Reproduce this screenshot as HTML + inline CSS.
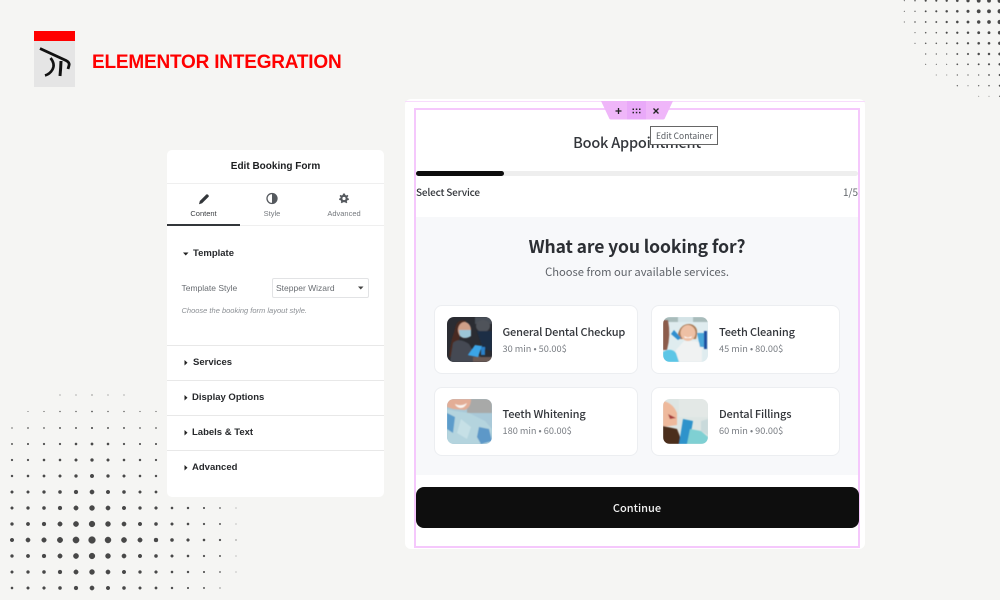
<!DOCTYPE html>
<html lang="en">
<head>
<meta charset="utf-8">
<title>Elementor Integration</title>
<style>
html,body{margin:0;padding:0}
body{width:1000px;height:600px;overflow:hidden;background:#f5f5f3;position:relative;font-family:"Liberation Sans",sans-serif}
.a{position:absolute}
.t{position:absolute;white-space:nowrap;line-height:16px;height:16px}
.n{font-family:"Noto Sans CJK JP","Liberation Sans",sans-serif}
.c{transform:translateX(-50%)}
.acc{font-size:9.5px;font-weight:bold;color:#26282b}
.div{position:absolute;left:167px;width:217px;height:1px;background:#e8e8e8}
.card{position:absolute;background:#fff;border:1px solid #eceef1;border-radius:8px;box-sizing:border-box}
.img{position:absolute;width:45px;height:45px}
.name{font-size:11px;letter-spacing:-.15px;font-weight:500;color:#33363b}
.sub{font-size:9.2px;color:#7b7f85}
</style>
</head>
<body>

<svg class="a" style="left:0;top:385px" width="250" height="215" viewBox="0 385 250 215" fill="#484848">
<g stroke="#484848" stroke-width=".5">
<circle cx="12" cy="540" r="1.8"/><circle cx="28" cy="540" r="2.1"/><circle cx="44" cy="540" r="2.3"/><circle cx="60" cy="540" r="2.7"/><circle cx="76" cy="540" r="3.1"/><circle cx="92" cy="540" r="3.4"/><circle cx="108" cy="540" r="3"/><circle cx="124" cy="540" r="2.6"/><circle cx="140" cy="540" r="2.2"/><circle cx="156" cy="540" r="2"/><circle cx="172" cy="540" r="1.6"/><circle cx="188" cy="540" r="1.4"/><circle cx="204" cy="540" r="1.1"/><circle cx="220" cy="540" r=".9"/><circle cx="236" cy="540" r=".4"/>
<circle cx="12" cy="524" r="1.5"/><circle cx="28" cy="524" r="1.7"/><circle cx="44" cy="524" r="1.9"/><circle cx="60" cy="524" r="2.2"/><circle cx="76" cy="524" r="2.6"/><circle cx="92" cy="524" r="2.9"/><circle cx="108" cy="524" r="2.5"/><circle cx="124" cy="524" r="2.1"/><circle cx="140" cy="524" r="1.8"/><circle cx="156" cy="524" r="1.6"/><circle cx="172" cy="524" r="1.3"/><circle cx="188" cy="524" r="1.1"/><circle cx="204" cy="524" r=".9"/><circle cx="220" cy="524" r=".7"/><circle cx="236" cy="524" r=".2"/>
<circle cx="12" cy="556" r="1.5"/><circle cx="28" cy="556" r="1.7"/><circle cx="44" cy="556" r="1.9"/><circle cx="60" cy="556" r="2.2"/><circle cx="76" cy="556" r="2.6"/><circle cx="92" cy="556" r="2.9"/><circle cx="108" cy="556" r="2.5"/><circle cx="124" cy="556" r="2.1"/><circle cx="140" cy="556" r="1.8"/><circle cx="156" cy="556" r="1.6"/><circle cx="172" cy="556" r="1.3"/><circle cx="188" cy="556" r="1.1"/><circle cx="204" cy="556" r=".9"/><circle cx="220" cy="556" r=".7"/><circle cx="236" cy="556" r=".2"/>
<circle cx="12" cy="508" r="1.3"/><circle cx="28" cy="508" r="1.5"/><circle cx="44" cy="508" r="1.6"/><circle cx="60" cy="508" r="1.9"/><circle cx="76" cy="508" r="2.2"/><circle cx="92" cy="508" r="2.5"/><circle cx="108" cy="508" r="2.1"/><circle cx="124" cy="508" r="1.8"/><circle cx="140" cy="508" r="1.5"/><circle cx="156" cy="508" r="1.4"/><circle cx="172" cy="508" r="1.1"/><circle cx="188" cy="508" r="1"/><circle cx="204" cy="508" r=".8"/><circle cx="220" cy="508" r=".6"/><circle cx="236" cy="508" r=".2"/>
<circle cx="12" cy="572" r="1.3"/><circle cx="28" cy="572" r="1.5"/><circle cx="44" cy="572" r="1.6"/><circle cx="60" cy="572" r="1.9"/><circle cx="76" cy="572" r="2.2"/><circle cx="92" cy="572" r="2.5"/><circle cx="108" cy="572" r="2.1"/><circle cx="124" cy="572" r="1.8"/><circle cx="140" cy="572" r="1.5"/><circle cx="156" cy="572" r="1.4"/><circle cx="172" cy="572" r="1.1"/><circle cx="188" cy="572" r="1"/><circle cx="204" cy="572" r=".8"/><circle cx="220" cy="572" r=".6"/><circle cx="236" cy="572" r=".2"/>
<circle cx="12" cy="588" r="1.1"/><circle cx="28" cy="588" r="1.3"/><circle cx="44" cy="588" r="1.4"/><circle cx="60" cy="588" r="1.6"/><circle cx="76" cy="588" r="1.9"/><circle cx="92" cy="588" r="2.1"/><circle cx="108" cy="588" r="1.8"/><circle cx="124" cy="588" r="1.6"/><circle cx="140" cy="588" r="1.3"/><circle cx="156" cy="588" r="1.2"/><circle cx="172" cy="588" r="1"/><circle cx="188" cy="588" r=".8"/><circle cx="204" cy="588" r=".7"/><circle cx="220" cy="588" r=".4"/>
<circle cx="12" cy="492" r="1.3"/><circle cx="28" cy="492" r="1.3"/><circle cx="44" cy="492" r="1.5"/><circle cx="60" cy="492" r="1.6"/><circle cx="76" cy="492" r="1.9"/><circle cx="92" cy="492" r="2.1"/><circle cx="108" cy="492" r="1.8"/><circle cx="124" cy="492" r="1.6"/><circle cx="140" cy="492" r="1.3"/><circle cx="156" cy="492" r="1.2"/>
<circle cx="12" cy="476" r="1"/><circle cx="28" cy="476" r="1.1"/><circle cx="44" cy="476" r="1.2"/><circle cx="60" cy="476" r="1.3"/><circle cx="76" cy="476" r="1.5"/><circle cx="92" cy="476" r="1.8"/><circle cx="108" cy="476" r="1.5"/><circle cx="124" cy="476" r="1.3"/><circle cx="140" cy="476" r="1.1"/><circle cx="156" cy="476" r="1"/>
<circle cx="12" cy="460" r=".9"/><circle cx="28" cy="460" r=".9"/><circle cx="44" cy="460" r="1.1"/><circle cx="60" cy="460" r="1.1"/><circle cx="76" cy="460" r="1.3"/><circle cx="92" cy="460" r="1.5"/><circle cx="108" cy="460" r="1.3"/><circle cx="124" cy="460" r="1.1"/><circle cx="140" cy="460" r="1"/><circle cx="156" cy="460" r=".9"/>
<circle cx="12" cy="444" r=".7"/><circle cx="28" cy="444" r=".8"/><circle cx="44" cy="444" r=".9"/><circle cx="60" cy="444" r=".9"/><circle cx="76" cy="444" r="1.1"/><circle cx="92" cy="444" r="1.2"/><circle cx="108" cy="444" r="1.1"/><circle cx="124" cy="444" r=".9"/><circle cx="140" cy="444" r=".8"/><circle cx="156" cy="444" r=".8"/>
<circle cx="12" cy="428" r=".5"/><circle cx="28" cy="428" r=".6"/><circle cx="44" cy="428" r=".6"/><circle cx="60" cy="428" r=".7"/><circle cx="76" cy="428" r=".7"/><circle cx="92" cy="428" r=".8"/><circle cx="108" cy="428" r=".7"/><circle cx="124" cy="428" r=".7"/><circle cx="140" cy="428" r=".6"/><circle cx="156" cy="428" r=".6"/>
<circle cx="28" cy="411.5" r=".3"/><circle cx="44" cy="411.5" r=".4"/><circle cx="60" cy="411.5" r=".5"/><circle cx="76" cy="411.5" r=".5"/><circle cx="92" cy="411.5" r=".6"/><circle cx="108" cy="411.5" r=".5"/><circle cx="124" cy="411.5" r=".5"/><circle cx="140" cy="411.5" r=".4"/><circle cx="156" cy="411.5" r=".4"/>
<circle cx="60" cy="395" r=".3"/><circle cx="76" cy="395" r=".3"/><circle cx="92" cy="395" r=".4"/><circle cx="108" cy="395" r=".3"/><circle cx="124" cy="395" r=".3"/>
</g>
</svg>

<svg class="a" style="left:890px;top:0" width="110" height="105" viewBox="890 0 110 105" fill="#484848">
<g stroke="#484848" stroke-width=".3">
<circle cx="904.3" cy=".7" r=".4"/><circle cx="915" cy=".7" r=".6"/><circle cx="925.7" cy=".7" r=".9"/><circle cx="936.3" cy=".7" r=".9"/><circle cx="946.7" cy=".7" r="1"/><circle cx="957.3" cy=".7" r="1.2"/><circle cx="968" cy=".7" r="1.5"/><circle cx="978.7" cy=".7" r="1.8"/><circle cx="989" cy=".7" r="1.8"/><circle cx="999.7" cy=".7" r="2"/>
<circle cx="904.3" cy="11.3" r=".4"/><circle cx="915" cy="11.3" r=".5"/><circle cx="925.7" cy="11.3" r=".8"/><circle cx="936.3" cy="11.3" r=".9"/><circle cx="946.7" cy="11.3" r="1.1"/><circle cx="957.3" cy="11.3" r="1.2"/><circle cx="968" cy="11.3" r="1.4"/><circle cx="978.7" cy="11.3" r="1.8"/><circle cx="989" cy="11.3" r="1.8"/><circle cx="999.7" cy="11.3" r="2"/>
<circle cx="904.3" cy="22" r=".4"/><circle cx="915" cy="22" r=".6"/><circle cx="925.7" cy="22" r=".7"/><circle cx="936.3" cy="22" r=".8"/><circle cx="946.7" cy="22" r="1"/><circle cx="957.3" cy="22" r="1.2"/><circle cx="968" cy="22" r="1.3"/><circle cx="978.7" cy="22" r="1.6"/><circle cx="989" cy="22" r="1.7"/><circle cx="999.7" cy="22" r="2"/>
<circle cx="915" cy="32.7" r=".4"/><circle cx="925.7" cy="32.7" r=".6"/><circle cx="936.3" cy="32.7" r=".6"/><circle cx="946.7" cy="32.7" r=".9"/><circle cx="957.3" cy="32.7" r="1"/><circle cx="968" cy="32.7" r="1.1"/><circle cx="978.7" cy="32.7" r="1.3"/><circle cx="989" cy="32.7" r="1.3"/><circle cx="999.7" cy="32.7" r="1.7"/>
<circle cx="915" cy="43.3" r=".4"/><circle cx="925.7" cy="43.3" r=".6"/><circle cx="936.3" cy="43.3" r=".6"/><circle cx="946.7" cy="43.3" r=".7"/><circle cx="957.3" cy="43.3" r=".9"/><circle cx="968" cy="43.3" r="1"/><circle cx="978.7" cy="43.3" r="1.2"/><circle cx="989" cy="43.3" r="1.2"/><circle cx="999.7" cy="43.3" r="1.5"/>
<circle cx="925.7" cy="54" r=".5"/><circle cx="936.3" cy="54" r=".5"/><circle cx="946.7" cy="54" r=".5"/><circle cx="957.3" cy="54" r=".8"/><circle cx="968" cy="54" r=".9"/><circle cx="978.7" cy="54" r="1.1"/><circle cx="989" cy="54" r="1.1"/><circle cx="999.7" cy="54" r="1.3"/>
<circle cx="925.7" cy="64.3" r=".4"/><circle cx="936.3" cy="64.3" r=".4"/><circle cx="946.7" cy="64.3" r=".4"/><circle cx="957.3" cy="64.3" r=".7"/><circle cx="968" cy="64.3" r=".7"/><circle cx="978.7" cy="64.3" r=".8"/><circle cx="989" cy="64.3" r=".9"/><circle cx="999.7" cy="64.3" r="1.1"/>
<circle cx="936.3" cy="75" r=".5" opacity=".5"/><circle cx="946.7" cy="75" r=".5" opacity=".5"/><circle cx="957.3" cy="75" r=".5"/><circle cx="968" cy="75" r=".5"/><circle cx="978.7" cy="75" r=".5"/><circle cx="989" cy="75" r=".7"/><circle cx="999.7" cy="75" r=".9"/>
<circle cx="957.3" cy="85.7" r=".5"/><circle cx="968" cy="85.7" r=".5" opacity=".6"/><circle cx="978.7" cy="85.7" r=".5"/><circle cx="989" cy="85.7" r=".6"/><circle cx="999.7" cy="85.7" r=".8"/>
<circle cx="978.7" cy="96.3" r=".4" opacity=".6"/><circle cx="989" cy="96.3" r=".4" opacity=".6"/><circle cx="999.7" cy="96.3" r=".5"/>
</g>
</svg>

<!-- Logo -->
<div class="a" style="left:34px;top:31px;width:41px;height:56px;background:#e5e5e5"></div>
<div class="a" style="left:34px;top:31px;width:41px;height:10px;background:#ff0000"></div>
<svg class="a" style="left:34px;top:41px" width="41" height="46" viewBox="34 41 41 46" fill="none" stroke="#111">
<path d="M40 48.5L66 60.5Q70 62.5 69 65.5L68 69" stroke-width="2.8"/>
<path d="M50.5 58Q55.5 64 52.5 69.5Q50 74 45 75.500" stroke-width="2.6"/>
<path d="M61 61Q60.8 68 60 76" stroke-width="3"/>
</svg>
<div class="t" style="left:92px;top:50.500px;height:24px;line-height:24px;font-size:19px;font-weight:bold;color:#ff0000;letter-spacing:-.2px">ELEMENTOR INTEGRATION</div>

<!-- Left panel -->
<div class="a" style="left:167px;top:150px;width:217px;height:347px;background:#fff;border-radius:5px"></div>
<div class="t c" style="left:275.5px;top:158.5px;font-size:10px;font-weight:bold;color:#1c1e20">Edit Booking Form</div>
<div class="div" style="top:183px;background:#efefef"></div>
<svg class="a" style="left:197px;top:192px" width="14" height="14" viewBox="0 0 14 14"><path d="M2 12.2L2.8 9L9.2 2.6Q10 1.9 10.8 2.6L11.6 3.4Q12.2 4.2 11.5 4.9L5.1 11.3Z" fill="#33363a"/></svg>
<svg class="a" style="left:266px;top:192px" width="12" height="13" viewBox="0 0 12 13"><circle cx="6" cy="6.5" r="5" fill="none" stroke="#55595e" stroke-width="1.3"/><path d="M6 1.5A5 5 0 0 1 6 11.5Z" fill="#55595e"/></svg>
<svg class="a" style="left:338px;top:192px" width="12" height="13" viewBox="0 0 12 13"><path d="M6 1.5L7 1.6 7.3 3 8.3 3.5 9.6 2.9 10.4 4 9.4 5.1 9.6 6.1 10.9 6.6 10.8 8 9.4 8.2 8.8 9.2 9.3 10.5 8.2 11.2 7.1 10.3H5L3.9 11.2 2.8 10.5 3.2 9.2 2.6 8.2 1.2 8 1.1 6.6 2.4 6.1 2.6 5.1 1.6 4 2.4 2.9 3.7 3.5 4.7 3 5 1.6Z" fill="#55595e"/><circle cx="6" cy="6.5" r="1.6" fill="#fff"/></svg>
<div class="t c" style="left:203.5px;top:205.5px;font-size:7.5px;color:#3b3e42">Content</div>
<div class="t c" style="left:272px;top:205.5px;font-size:7.5px;color:#75797e">Style</div>
<div class="t c" style="left:344px;top:205.5px;font-size:7.5px;color:#75797e">Advanced</div>
<div class="div" style="top:225px;background:#efefef"></div>
<div class="a" style="left:167px;top:224px;width:73px;height:2px;background:#33363a"></div>

<svg class="a" style="left:183px;top:252px" width="6" height="4"><path d="M0 .5H5.5L2.75 3.5Z" fill="#222"/></svg>
<div class="t acc" style="left:193px;top:245.5px">Template</div>
<div class="t" style="left:181.5px;top:279.5px;font-size:8.5px;color:#696d72">Template Style</div>
<div class="a" style="left:272px;top:278px;width:97px;height:20px;box-sizing:border-box;border:1px solid #e2e3e5;border-radius:2px;background:#fff"></div>
<div class="t" style="left:276px;top:279.5px;font-size:8.5px;color:#696d72">Stepper Wizard</div>
<svg class="a" style="left:358px;top:286px" width="6" height="4"><path d="M0 .5H5.5L2.75 3.5Z" fill="#444"/></svg>
<div class="t" style="left:181.5px;top:302.5px;font-size:7.5px;font-style:italic;color:#8b8f94">Choose the booking form layout style.</div>

<div class="div" style="top:345px"></div>
<div class="div" style="top:380px"></div>
<div class="div" style="top:415px"></div>
<div class="div" style="top:450px"></div>
<svg class="a" style="left:184px;top:360px" width="4" height="6"><path d="M.5 0V5.5L3.5 2.75Z" fill="#222"/></svg>
<div class="t acc" style="left:193px;top:355px">Services</div>
<svg class="a" style="left:184px;top:395px" width="4" height="6"><path d="M.5 0V5.5L3.5 2.75Z" fill="#222"/></svg>
<div class="t acc" style="left:192px;top:390px">Display Options</div>
<svg class="a" style="left:184px;top:429.5px" width="4" height="6"><path d="M.5 0V5.5L3.5 2.75Z" fill="#222"/></svg>
<div class="t acc" style="left:192px;top:424.5px">Labels &amp; Text</div>
<svg class="a" style="left:184px;top:464.5px" width="4" height="6"><path d="M.5 0V5.5L3.5 2.75Z" fill="#222"/></svg>
<div class="t acc" style="left:192px;top:459.5px">Advanced</div>

<!-- Right panel -->
<div class="a" style="left:405px;top:99px;width:460px;height:450px;background:#fff;border-radius:6px"></div>
<div class="a" style="left:405px;top:101px;width:460px;height:1px;background:#f8dcfc"></div>
<div class="a" style="left:416px;top:217px;width:442px;height:258px;background:#f7f8fa"></div>
<div class="a" style="left:414px;top:108px;width:446px;height:440px;box-sizing:border-box;border:2px solid #f5c8fc"></div>

<div class="t c n" style="left:637px;top:132.5px;height:20px;line-height:20px;font-size:14.5px;letter-spacing:-.2px;font-weight:500;color:#33363b">Book Appointment</div>
<div class="a" style="left:416px;top:171px;width:442px;height:5px;background:#eeeeee;border-radius:3px"></div>
<div class="a" style="left:416px;top:171px;width:88px;height:5px;background:#0d0d0d;border-radius:3px"></div>
<div class="t n" style="left:416px;top:184px;font-size:10px;letter-spacing:-.2px;font-weight:500;color:#33363b">Select Service</div>
<div class="t n" style="right:142px;top:184px;font-size:10px;color:#5d6167">1/5</div>

<!-- Handle -->
<svg class="a" style="left:600px;top:101px" width="74" height="19" viewBox="0 0 74 19"><path d="M1 0H73L64.5 18Q64 18.5 63 18.5H11Q10 18.5 9.5 18Z" fill="#efb6f9"/><rect x="27" y="0" width="19" height="18.5" fill="#e9a9f9"/>
<path d="M15.5 10H21.5M18.5 7V13" stroke="#222" stroke-width="1.3"/>
<g fill="#222"><rect x="32.5" y="7.5" width="1.5" height="1.5"/><rect x="35.8" y="7.5" width="1.5" height="1.5"/><rect x="39" y="7.5" width="1.5" height="1.5"/><rect x="32.5" y="10.8" width="1.5" height="1.5"/><rect x="35.8" y="10.8" width="1.5" height="1.5"/><rect x="39" y="10.8" width="1.5" height="1.5"/></g>
<path d="M53.5 7.5L58.5 12.5M58.5 7.5L53.5 12.5" stroke="#222" stroke-width="1.3"/></svg>
<div class="a" style="left:650px;top:126px;width:67.5px;height:19px;box-sizing:border-box;background:#fff;border:1px solid #666"></div>
<div class="t n" style="left:656px;top:127.5px;font-size:8.5px;color:#55595e">Edit Container</div>

<div class="t c n" style="left:637px;top:235px;height:24px;line-height:24px;font-size:17.5px;letter-spacing:-.1px;font-weight:700;color:#2c2f34">What are you looking for?</div>
<div class="t c n" style="left:637px;top:264px;font-size:11.2px;color:#5f6369">Choose from our available services.</div>

<!-- Cards -->
<div class="card" style="left:434px;top:305px;width:204px;height:69px"></div>
<div class="card" style="left:651px;top:305px;width:189px;height:69px"></div>
<div class="card" style="left:434px;top:387px;width:204px;height:69px"></div>
<div class="card" style="left:651px;top:387px;width:189px;height:69px"></div>

<svg class="img" style="left:446.5px;top:317px" viewBox="0 0 45 45">
<defs><clipPath id="r"><rect width="45" height="45" rx="7"/></clipPath>
<filter id="b"><feGaussianBlur stdDeviation=".6"/></filter></defs>
<g clip-path="url(#r)"><rect width="45" height="45" fill="#2a2c32"/>
<g filter="url(#b)"><rect x="28" y="0" width="17" height="7" fill="#4a4f58"/>
<path d="M19 4Q10 1 8 12L5 22Q3 30 2 40H9L13 18Z" fill="#4a2c20"/>
<ellipse cx="17.5" cy="13" rx="6.5" ry="8" fill="#cf9f88"/>
<path d="M12 13H24V19Q18 23 13 19Z" fill="#9cc6d8"/>
<path d="M3 45L6 26Q12 20 22 27L26 34L34 40V45Z" fill="#454a53"/>
<ellipse cx="36" cy="9" rx="7" ry="6" fill="#50535a"/>
<path d="M30 14H45V34L36 32Z" fill="#1d2f45"/>
<path d="M21 38L28 28L35 29L31 40Z" fill="#3ba5e8"/>
<path d="M34 30H38V38H34Z" fill="#2980c8"/>
<path d="M26 40H45V45H26Z" fill="#6b5a54"/></g></g></svg>

<svg class="img" style="left:662.5px;top:317px" viewBox="0 0 45 45">
<g clip-path="url(#r)"><rect width="45" height="45" fill="#dfecef"/>
<g filter="url(#b)"><rect x="0" y="0" width="45" height="5" fill="#a9bcbb"/>
<rect x="15" y="0" width="15" height="5" fill="#d4e3e6"/>
<path d="M0 3H5Q8 18 4 33H0Z" fill="#8c5c4c"/>
<path d="M14 22Q16 6 27 7Q37 9 33 22Z" fill="#a97b56"/>
<ellipse cx="25" cy="16" rx="7.5" ry="8" fill="#eec0a4"/>
<path d="M21 19Q25 22 29 19L28 21H22Z" fill="#fff"/>
<path d="M13 33L21 24H32L39 27V45H12Z" fill="#f0f2f2"/>
<path d="M11 13L18 21L15 23L8 17Z" fill="#2f8fd0"/>
<path d="M34 16H42V30H37Z" fill="#4aa6d8"/>
<path d="M41 14H44V32H41Z" fill="#1c4fa0"/>
<path d="M0 35Q8 30 13 36L16 45H0Z" fill="#5cc6e6"/></g></g></svg>

<svg class="img" style="left:446.5px;top:399px" viewBox="0 0 45 45">
<g clip-path="url(#r)"><rect width="45" height="45" fill="#a9c9d8"/>
<g filter="url(#b)"><rect x="20" y="0" width="25" height="14" fill="#a8a9a8"/>
<path d="M0 0H24Q24 8 18 11L6 10L0 8Z" fill="#e3ad96"/>
<path d="M8 5Q14 8 20 4Q18 9 13 9Q9 8 8 5Z" fill="#fbf6f2"/>
<path d="M0 10L8 12L22 14L38 22L45 30V45H0Z" fill="#b4d4de"/>
<path d="M0 14L8 18L6 34L0 30Z" fill="#5b9ccb"/>
<path d="M32 28L42 30L45 42L34 45L30 38Z" fill="#5d98c8"/>
<path d="M14 20L24 28L20 40L10 34Z" fill="#c6e0e6"/></g></g></svg>

<svg class="img" style="left:662.5px;top:399px" viewBox="0 0 45 45">
<g clip-path="url(#r)"><rect width="45" height="45" fill="#dde5e3"/>
<g filter="url(#b)"><rect x="16" y="0" width="29" height="18" fill="#e3e8e6"/>
<path d="M0 2Q10 4 14 14L14 26L0 28Z" fill="#eeb99c"/>
<path d="M5 15L13 19L7 20Z" fill="#a63a3a"/>
<path d="M0 27L14 30L20 45H0Z" fill="#4b2d1e"/>
<path d="M16 45L20 20L30 22L26 45Z" fill="#2d93cb"/>
<path d="M27 30L38 32L45 38V45H24Z" fill="#7fd0d3"/>
<path d="M38 22L45 20V36L38 32Z" fill="#c9dadb"/></g></g></svg>

<div class="t n name" style="left:502.5px;top:323.5px">General Dental Checkup</div>
<div class="t n sub" style="left:502.5px;top:340px">30 min • 50.00$</div>
<div class="t n name" style="left:719px;top:323.5px">Teeth Cleaning</div>
<div class="t n sub" style="left:719px;top:340px">45 min • 80.00$</div>
<div class="t n name" style="left:502.5px;top:405.5px">Teeth Whitening</div>
<div class="t n sub" style="left:502.5px;top:422px">180 min • 60.00$</div>
<div class="t n name" style="left:719px;top:405.5px">Dental Fillings</div>
<div class="t n sub" style="left:719px;top:422px">60 min • 90.00$</div>

<div class="a" style="left:416px;top:487px;width:442.5px;height:41px;background:#0e0e0e;border-radius:8px"></div>
<div class="t c n" style="left:637px;top:500px;font-size:11px;font-weight:500;color:#f2f2f2">Continue</div>

</body>
</html>
